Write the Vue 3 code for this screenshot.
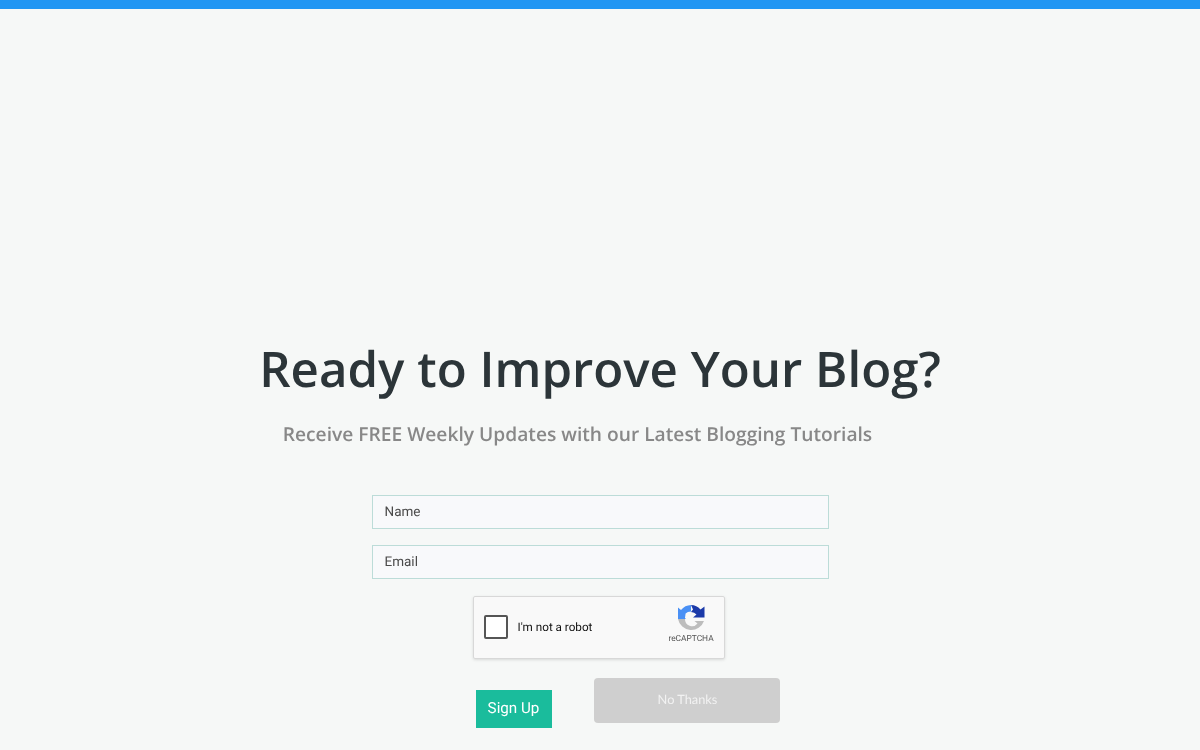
<script setup>
import { ref } from 'vue';

const name = ref('');
const email = ref('');
</script>

<template>
  <div class="page">
    <div class="top-bar"></div>
    <div class="content">
      <h1>Ready to Improve Your Blog?</h1>
      <h2>Receive FREE Weekly Updates with our Latest Blogging Tutorials</h2>

      <form class="signup" @submit.prevent>
        <input v-model="name" type="text" placeholder="Name">
        <input v-model="email" type="text" placeholder="Email">

        <div class="captcha">
          <span class="check"></span>
          <span class="robot">I'm not a robot</span>
          <div class="brand">
            <svg width="27" height="28" viewBox="0 0 27 28">
              <path d="M13 0 A13.5 13.5 0 0 0 3 5 L0 2.5 V14 H8 L7 13 L7.6 8.5 Q9.5 6.5 13 6.5 Z" fill="#4a90f5" />
              <path d="M13 0 A13.5 13.5 0 0 1 22.5 4.5 L26.5 1.5 V12.5 H15 L18.5 9.5 Q16.5 7 13 7 L15 4.5 Z" fill="#1c3aa9" />
              <path d="M0 14 H7 A7 7 0 0 0 19.5 18.5 L16.5 16 H26 A13.5 13.5 0 0 1 0 14 Z" fill="#bdbdbd" />
            </svg>
            <span>reCAPTCHA</span>
          </div>
        </div>

        <div class="actions">
          <button class="btn-signup" type="submit">Sign Up</button>
          <button class="btn-no" type="button">No Thanks</button>
        </div>
      </form>
    </div>
  </div>
</template>

<style>
html, body { margin: 0; background: #f6f8f7; }
</style>

<style scoped>
.page { height: 750px; overflow: hidden; background: #f6f8f7; text-rendering: geometricPrecision; }
.top-bar { height: 9px; background: #2196f3; }
.content { padding-top: 327px; display: flex; flex-direction: column; align-items: center; will-change: opacity; }
h1 { margin: 0; font: 600 49.2px/65px "Open Sans", sans-serif; color: #2c3539; }
h2 { margin: 19px 45px 0 0; font: 600 19.2px/28px "Open Sans", sans-serif; color: #888; }
.signup { width: 457px; margin-top: 47px; display: flex; flex-direction: column; align-items: center; }
input { box-sizing: border-box; width: 100%; height: 33.5px; margin-bottom: 16.5px; padding: 0 12px; border: 1px solid #bcdcd8; background: #f8f9fb; font: 13.5px Roboto, sans-serif; color: #444; outline: none; text-rendering: geometricPrecision; }
input::placeholder { color: #4a4a4a; opacity: 1; }
.captcha { box-sizing: border-box; width: 252px; height: 63px; margin: 1px 2px 0 0; display: flex; align-items: center; padding: 0 10px; background: #f9f9f9; border: 1px solid #d8d8d8; border-radius: 2px; box-shadow: 0 1px 3px rgba(0,0,0,0.12); }
.check { box-sizing: border-box; width: 24px; height: 24px; margin-top: -1px; background: #fff; border: 2px solid #555; border-radius: 2px; }
.robot { margin: -1px 0 0 9.5px; font: 11.7px Roboto, sans-serif; color: #111; }
.brand { margin: -6px 0 0 auto; width: 46px; display: flex; flex-direction: column; align-items: center; font: 8.4px Roboto, sans-serif; color: #555; }
.brand span { margin-top: 1px; }
.actions { width: 304px; margin-top: 19px; align-self: flex-start; margin-left: 104px; display: flex; align-items: flex-start; gap: 42px; }
button { border: none; font-family: inherit; cursor: pointer; text-rendering: geometricPrecision; }
.btn-signup { width: 76px; height: 38px; margin-top: 12px; padding: 0 0 2px; background: #1abc9c; color: #fff; font: 15.2px Roboto, sans-serif; }
.btn-no { width: 186px; height: 45px; padding: 0 0 3px 2px; background: #cfcfcf; border-radius: 4px; color: #f2f2f2; font: 12.8px Lato, sans-serif; }
</style>
